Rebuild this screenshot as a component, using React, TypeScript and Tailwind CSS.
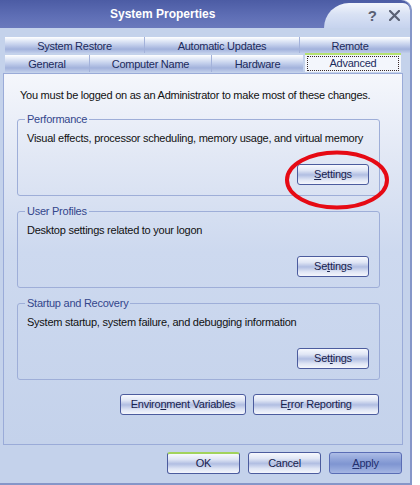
import type { ReactNode } from 'react';

type ButtonKind = 'normal' | 'default' | 'disabled';

function XpButton({
  children,
  width,
  kind = 'normal',
}: {
  children: ReactNode;
  width: string;
  kind?: ButtonKind;
}) {
  const base =
    'flex h-[21px] items-center justify-center rounded-[3px] border text-[11px] leading-none tracking-[-0.25px]';
  const skin =
    kind === 'disabled'
      ? 'border-[#5a6db5] bg-[linear-gradient(to_bottom,#aebde6_0%,#92a6da_30%,#7f95d1_55%,#93a7db_80%,#a6b6e3_100%)] text-[#22306e]'
      : kind === 'default'
        ? 'border-[#4c5c9e] border-t-2 border-t-[#a2d35c] bg-[linear-gradient(to_bottom,#f7f9fe_0%,#e0e6f5_28%,#b1bee2_52%,#e0e6f5_78%,#f4f6fc_100%)] text-[#18224e]'
        : 'border-[#4c5c9e] bg-[linear-gradient(to_bottom,#f7f9fe_0%,#e0e6f5_28%,#b1bee2_52%,#e0e6f5_78%,#f4f6fc_100%)] text-[#18224e]';
  return <button className={`${base} ${skin} ${width}`}>{children}</button>;
}

function GroupBox({
  title,
  text,
  button,
}: {
  title: string;
  text: string;
  button: ReactNode;
}) {
  return (
    <fieldset className="ml-[13px] mt-[8px] w-[363px] rounded-[3px] border border-[#9eaed8]">
      <legend className="ml-[7px] px-[2px] text-[11px] leading-[14px] tracking-[-0.25px] text-[#33468c]">
        {title}
      </legend>
      <div className="mt-[5px] pl-[9px] text-[11px] leading-[14px] tracking-[-0.25px] text-[#111]">
        {text}
      </div>
      <div className="mt-[19px] flex justify-end pb-[10px] pr-[10px]">{button}</div>
    </fieldset>
  );
}

const gloss =
  'bg-[linear-gradient(to_bottom,#ffffff_0%,#e6ecf8_20%,#c4d0ec_48%,#a2b2dc_76%,#c0cdea_100%)]';

export default function App() {
  return (
    <div className="h-[485px] w-[420px] bg-white font-['Liberation_Sans',Arial,sans-serif]">
      <div className="flex h-[485px] w-[412px] flex-col rounded-tr-[10px] border-b-2 border-r-2 border-[#8596c8] bg-[#c4d2eb]">
        {/* Title bar */}
        <div className="flex h-[28px] rounded-tr-[9px] bg-[linear-gradient(to_bottom,#4c5ca4,#5f6fb6_60%,#6a79bc)]">
          <div className="flex flex-1 items-center pl-[110px] text-[12px] font-bold text-white">
            System Properties
          </div>
          <div className="mt-[3px] flex w-[86px] items-center justify-end gap-[12px] rounded-tl-[28px] rounded-tr-[8px] bg-[linear-gradient(to_bottom,#f2f5fc,#d9e2f4_45%,#c6d3ee)] pr-[10px]">
            <span className="text-[15px] font-bold leading-none text-[#5a6174]">?</span>
            <svg width="11" height="11" viewBox="0 0 11 11">
              <path d="M1 1 L10 10 M10 1 L1 10" stroke="#5a6174" strokeWidth="2.2" strokeLinecap="round" />
            </svg>
          </div>
        </div>

        {/* Tabs */}
        <div className="ml-[5px] mt-[9px] text-[11px] tracking-[-0.25px] text-[#1c2a5c]">
          <div className={`flex h-[16px] ${gloss}`}>
            <div className="flex w-[140px] items-center justify-center border-r border-[#a3b2da] pt-[2px]">System Restore</div>
            <div className="flex w-[155px] items-center justify-center border-r border-[#a3b2da] pt-[2px]">Automatic Updates</div>
            <div className="flex w-[100px] items-center justify-center pt-[2px]">Remote</div>
          </div>
          <div className="mt-[2px] flex items-end">
            <div className={`flex h-[17px] ${gloss}`}>
              <div className="flex w-[85px] items-center justify-center border-r border-[#a3b2da] pt-[2px]">General</div>
              <div className="flex w-[122px] items-center justify-center border-r border-[#a3b2da] pt-[2px]">Computer Name</div>
              <div className="flex w-[91px] items-center justify-center pt-[2px]">Hardware</div>
            </div>
            <div className="-mt-[2px] ml-[2px] h-[19px] w-[96px] border-t-2 border-[#b4e070] bg-[#f3f6fc] px-[2px] pt-[1px]">
              <div className="flex h-[15px] items-center justify-center border border-dotted border-[#3a2a2a]">
                Advanced
              </div>
            </div>
          </div>
        </div>

        {/* Tab panel */}
        <div className="ml-[3px] mt-[1px] flex h-[372px] w-[400px] flex-col border border-[#9aabd8] bg-[linear-gradient(to_bottom,#f5f7fc_0%,#e2e8f5_22%,#cdd9ef_48%,#c4d2eb_100%)]">
          <div className="ml-[16px] mt-[14px] text-[11px] leading-[14px] tracking-[-0.25px] text-[#111]">
            You must be logged on as an Administrator to make most of these changes.
          </div>

          <div className="mt-[2px]">
            <GroupBox
              title="Performance"
              text="Visual effects, processor scheduling, memory usage, and virtual memory"
              button={
                <div className="relative">
                  <XpButton width="w-[72px]">
                    <span className="underline">S</span>ettings
                  </XpButton>
                  <svg
                    className="pointer-events-none absolute left-[-13px] top-[-15px]"
                    width="106"
                    height="62"
                    viewBox="0 0 106 62"
                  >
                    <ellipse cx="53" cy="31" rx="50" ry="27.5" fill="none" stroke="#e60a14" strokeWidth="4" />
                  </svg>
                </div>
              }
            />
          </div>
          <GroupBox
            title="User Profiles"
            text="Desktop settings related to your logon"
            button={
              <XpButton width="w-[72px]">
                Se<span className="underline">t</span>tings
              </XpButton>
            }
          />
          <GroupBox
            title="Startup and Recovery"
            text="System startup, system failure, and debugging information"
            button={
              <XpButton width="w-[72px]">
                Set<span className="underline">t</span>ings
              </XpButton>
            }
          />

          <div className="mr-[23px] mt-[14px] flex justify-end gap-[7px]">
            <XpButton width="w-[126px]">
              Enviro<span className="underline">n</span>ment Variables
            </XpButton>
            <XpButton width="w-[126px]">
              E<span className="underline">r</span>ror Reporting
            </XpButton>
          </div>
        </div>

        {/* Dialog buttons */}
        <div className="mt-[7px] flex justify-end gap-[8px] pr-[8px]">
          <XpButton width="w-[73px] h-[22px]" kind="default">
            OK
          </XpButton>
          <XpButton width="w-[73px] h-[22px]">Cancel</XpButton>
          <XpButton width="w-[73px] h-[22px]" kind="disabled">
            <span className="underline">A</span>pply
          </XpButton>
        </div>
      </div>
    </div>
  );
}
